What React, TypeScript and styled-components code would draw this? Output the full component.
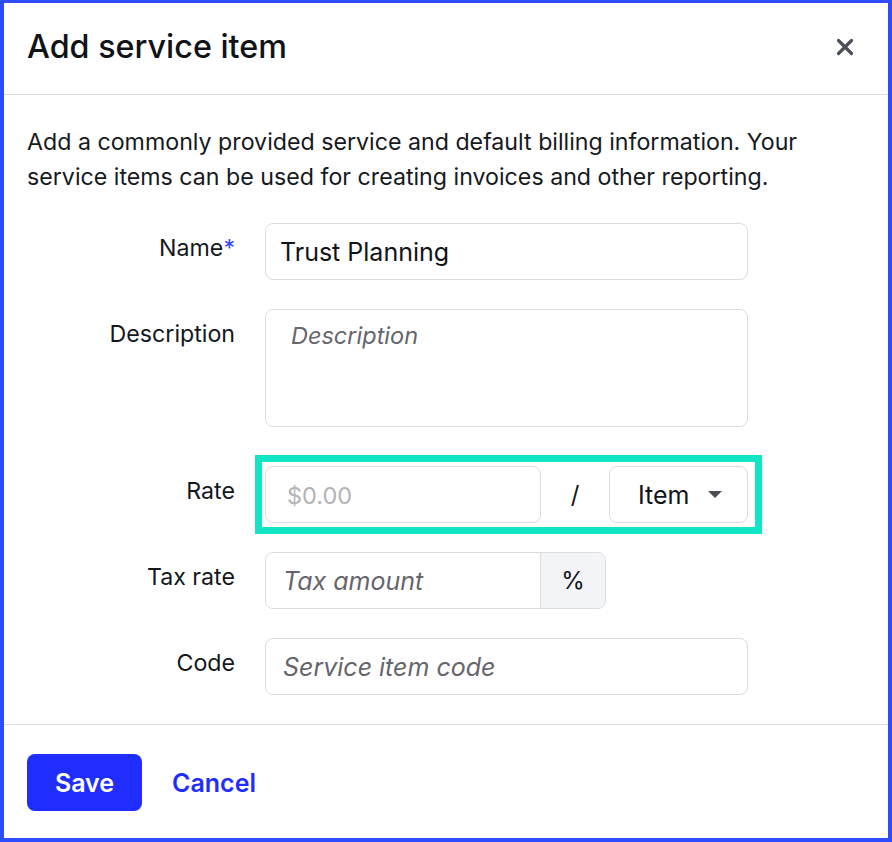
import React from 'react';
import styled, { createGlobalStyle } from 'styled-components';

const GlobalStyle = createGlobalStyle`
  * {
    box-sizing: border-box;
  }

  html, body {
    margin: 0;
    padding: 0;
    background: #ffffff;
  }

  body {
    font-family: Inter, "Noto Sans", "Liberation Sans", sans-serif;
    color: #111418;
  }
`;

const Frame = styled.div`
  width: 892px;
  height: 842px;
  border-style: solid;
  border-color: #2e4bff;
  border-width: 3px 4px 4px 4px;
  display: flex;
  flex-direction: column;
  background: #fff;
`;

const Header = styled.header`
  height: 92px;
  flex-shrink: 0;
  display: flex;
  align-items: center;
  justify-content: space-between;
  padding: 0 31px 4px 23px;
  border-bottom: 1px solid #dcdcde;
`;

const Title = styled.h1`
  margin: 0;
  font-size: 32.3px;
  font-weight: 500;
  color: #101318;
`;

const CloseButton = styled.button`
  border: 0;
  background: none;
  padding: 0;
  width: 24px;
  height: 24px;
  display: flex;
  align-items: center;
  justify-content: center;
  cursor: pointer;
`;

const Body = styled.div`
  padding: 30px 23px 29px;
  display: flex;
  flex-direction: column;
`;

const Intro = styled.p`
  margin: 0 0 28px;
  max-width: 800px;
  font-size: 23.2px;
  line-height: 35px;
  color: #16191d;
`;

const Form = styled.div`
  display: flex;
  flex-direction: column;
  gap: 29px;
`;

const Row = styled.div<{ $highlight?: boolean }>`
  display: grid;
  grid-template-columns: 208px 483px;
  column-gap: 30px;
  align-items: start;
  margin-top: ${({ $highlight }) => ($highlight ? '10px' : '0')};
`;

const Label = styled.label`
  text-align: right;
  font-size: 23.2px;
  line-height: 28px;
  padding-top: 11px;
  color: #14171b;
`;

const Required = styled.span`
  color: #2e45ff;
`;

const Input = styled.input<{ $plain?: boolean }>`
  width: 100%;
  height: 57px;
  border: 1px solid #dcdcde;
  border-radius: 8px;
  padding: 0 14px;
  font-family: inherit;
  font-size: 25px;
  color: #111418;
  background: #fff;
  outline: none;

  &:placeholder-shown {
    padding-left: ${({ $plain }) => ($plain ? '21px' : '17px')};
  }

  &::placeholder {
    color: ${({ $plain }) => ($plain ? '#b3b3b6' : '#65656b')};
    font-style: ${({ $plain }) => ($plain ? 'normal' : 'italic')};
    font-size: ${({ $plain }) => ($plain ? '23.5px' : '25px')};
    opacity: 1;
  }
`;

const TextArea = styled.textarea`
  width: 100%;
  height: 118px;
  border: 1px solid #dcdcde;
  border-radius: 8px;
  padding: 11px 25px;
  font-family: inherit;
  font-size: 23.5px;
  line-height: 30px;
  resize: none;
  outline: none;

  &::placeholder {
    color: #65656b;
    font-style: italic;
    opacity: 1;
  }
`;

const RateGroup = styled.div`
  margin: -11px -14px -11px -10px;
  padding: 4px 7px 4px 3px;
  border: 7px solid #12e5c6;
  display: grid;
  grid-template-columns: 276px 1fr 139px;
  align-items: center;
`;

const Slash = styled.span`
  text-align: center;
  font-size: 24px;
  color: #111418;
`;

const Select = styled.div`
  height: 57px;
  border: 1px solid #dcdcde;
  border-radius: 8px;
  display: flex;
  align-items: center;
  justify-content: space-between;
  padding: 0 25px 0 28px;
  font-size: 25px;
  color: #111418;
`;

const InputGroup = styled.div`
  display: flex;
  width: 341px;
  height: 57px;
  border: 1px solid #dcdcde;
  border-radius: 8px;
  overflow: hidden;

  input {
    border: 0;
    border-radius: 0;
    height: 100%;
    flex: 1;
  }
`;

const Addon = styled.span`
  width: 65px;
  flex-shrink: 0;
  background: #f3f4f7;
  border-left: 1px solid #dcdcde;
  display: flex;
  align-items: center;
  justify-content: center;
  font-size: 24px;
  color: #111418;
`;

const Footer = styled.footer`
  border-top: 1px solid #dcdcde;
  padding: 29px 23px;
  display: flex;
  align-items: center;
  gap: 30px;
`;

const PrimaryButton = styled.button`
  width: 115px;
  height: 57px;
  border: 0;
  border-radius: 8px;
  background: #1f2eff;
  color: #fff;
  font-family: inherit;
  font-size: 25px;
  font-weight: 600;
  cursor: pointer;
`;

const LinkButton = styled.button`
  border: 0;
  background: none;
  padding: 0;
  color: #1f2eff;
  font-family: inherit;
  font-size: 25px;
  font-weight: 600;
  cursor: pointer;
`;

const Caret = () => (
  <svg width="14" height="8" viewBox="0 0 14 8">
    <path d="M0 0 H14 L7 7 Z" fill="#4b4e55" />
  </svg>
);

const CloseIcon = () => (
  <svg width="18" height="18" viewBox="0 0 18 18">
    <path d="M2.5 2.5 L15.5 15.5 M15.5 2.5 L2.5 15.5" stroke="#4b5058" strokeWidth="3.2" strokeLinecap="round" />
  </svg>
);

export default function App() {
  return (
    <>
      <GlobalStyle />
      <Frame>
        <Header>
          <Title>Add service item</Title>
          <CloseButton aria-label="Close">
            <CloseIcon />
          </CloseButton>
        </Header>
        <Body>
          <Intro>
            Add a commonly provided service and default billing information. Your service items can be
            used for creating invoices and other reporting.
          </Intro>
          <Form>
            <Row>
              <Label>
                Name<Required>*</Required>
              </Label>
              <Input defaultValue="Trust Planning" />
            </Row>
            <Row>
              <Label>Description</Label>
              <TextArea placeholder="Description" />
            </Row>
            <Row $highlight>
              <Label>Rate</Label>
              <RateGroup>
                <Input $plain placeholder="$0.00" />
                <Slash>/</Slash>
                <Select>
                  Item
                  <Caret />
                </Select>
              </RateGroup>
            </Row>
            <Row>
              <Label>Tax rate</Label>
              <InputGroup>
                <Input placeholder="Tax amount" />
                <Addon>%</Addon>
              </InputGroup>
            </Row>
            <Row>
              <Label>Code</Label>
              <Input placeholder="Service item code" />
            </Row>
          </Form>
        </Body>
        <Footer>
          <PrimaryButton>Save</PrimaryButton>
          <LinkButton>Cancel</LinkButton>
        </Footer>
      </Frame>
    </>
  );
}
